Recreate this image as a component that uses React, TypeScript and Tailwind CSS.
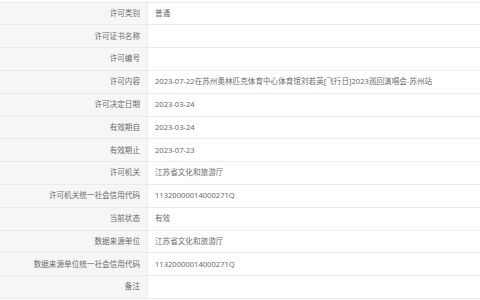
const rows: [string, string][] = [
  ['许可类别', '普通'],
  ['许可证书名称', ''],
  ['许可编号', ''],
  ['许可内容', '2023-07-22在苏州奥林匹克体育中心体育馆刘若英[飞行日]2023巡回演唱会-苏州站'],
  ['许可决定日期', '2023-03-24'],
  ['有效期自', '2023-03-24'],
  ['有效期止', '2023-07-23'],
  ['许可机关', '江苏省文化和旅游厅'],
  ['许可机关统一社会信用代码', '11320000014000271Q'],
  ['当前状态', '有效'],
  ['数据来源单位', '江苏省文化和旅游厅'],
  ['数据来源单位统一社会信用代码', '11320000014000271Q'],
  ['备注', ''],
];

export default function App() {
  return (
    <div
      className="w-[480px] h-[300px] overflow-hidden bg-white pt-[1.6px]"
      style={{ fontFamily: '"Noto Sans", "Noto Sans CJK SC", sans-serif' }}
    >
      <div className="border-t border-[#ebebeb]">
        {rows.map(([label, value]) => (
          <div key={label} className="flex h-[22.8px] border-b border-[#ebebeb] text-[7.6px] text-[#6b6b6b]">
            <div className="w-[148px] shrink-0 bg-[#f6f6f6] border-r border-[#ebebeb] flex items-center justify-end pr-[7px]">
              {label}
            </div>
            <div className="flex-1 flex items-center pl-[7px] whitespace-nowrap">{value}</div>
          </div>
        ))}
      </div>
    </div>
  );
}
